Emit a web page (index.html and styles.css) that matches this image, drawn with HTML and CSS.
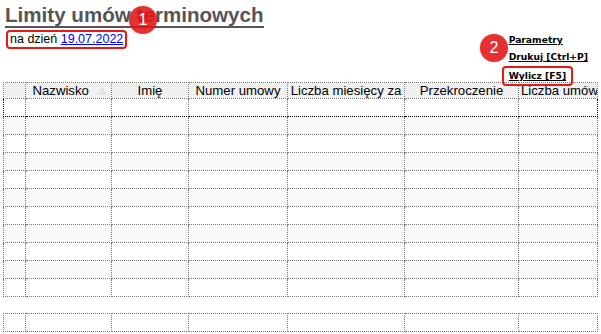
FILE: index.html
```html
<!DOCTYPE html>
<html>

<head>
  <title>Limity umów terminowych</title>
  <link rel="stylesheet" href="styles.css">
</head>

<body>
  <div id="top">
    <div id="heading">
      <h1 id="title">Limity umów terminowych</h1>
      <p id="date" class="marked">na dzień <a href="#">19.07.2022</a></p>
    </div>
    <div id="actions">
      <a href="#">Parametry</a>
      <a href="#">Drukuj [Ctrl+P]</a>
      <a href="#" class="marked">Wylicz [F5]</a>
    </div>
  </div>

  <span class="badge badge-one">1</span>
  <span class="badge badge-two">2</span>

  <table id="grid">
    <colgroup>
      <col class="c-sel">
      <col class="c-name">
      <col class="c-first">
      <col class="c-num">
      <col class="c-months">
      <col class="c-over">
      <col class="c-count">
    </colgroup>
    <thead>
      <tr>
        <th></th>
        <th>Nazwisko <span class="sort">&#9651;</span></th>
        <th>Imię</th>
        <th>Numer umowy</th>
        <th>Liczba miesięcy za</th>
        <th>Przekroczenie</th>
        <th class="left">Liczba umów</th>
      </tr>
    </thead>
    <tbody>
      <tr class="current"><td></td><td></td><td></td><td></td><td></td><td></td><td></td></tr>
      <tr><td></td><td></td><td></td><td></td><td></td><td></td><td></td></tr>
      <tr><td></td><td></td><td></td><td></td><td></td><td></td><td></td></tr>
      <tr><td></td><td></td><td></td><td></td><td></td><td></td><td></td></tr>
      <tr><td></td><td></td><td></td><td></td><td></td><td></td><td></td></tr>
      <tr><td></td><td></td><td></td><td></td><td></td><td></td><td></td></tr>
      <tr><td></td><td></td><td></td><td></td><td></td><td></td><td></td></tr>
      <tr><td></td><td></td><td></td><td></td><td></td><td></td><td></td></tr>
      <tr><td></td><td></td><td></td><td></td><td></td><td></td><td></td></tr>
      <tr><td></td><td></td><td></td><td></td><td></td><td></td><td></td></tr>
      <tr><td></td><td></td><td></td><td></td><td></td><td></td><td></td></tr>
    </tbody>
  </table>

  <table id="totals">
    <colgroup>
      <col class="c-sel">
      <col class="c-name">
      <col class="c-first">
      <col class="c-num">
      <col class="c-months">
      <col class="c-over">
      <col class="c-count">
    </colgroup>
    <tr><td></td><td></td><td></td><td></td><td></td><td></td><td></td></tr>
  </table>
</body>

</html>
```

FILE: styles.css
```css
body {
  margin: 0;
  font-family: "Liberation Sans", Arial, sans-serif;
  background-color: #fff;
  position: relative;
}

#top {
  display: flex;
  justify-content: space-between;
  padding: 4px 13px 0 5px;
  height: 82px;
  box-sizing: border-box;
}

#title {
  margin: 0;
  font-size: 20.6px;
  line-height: 22px;
  color: #555;
  border-bottom: 2px solid #555;
  display: inline-block;
}

#date {
  margin: 2px 0 0 1px;
  font-size: 12.5px;
  line-height: 15px;
  color: #000;
  width: fit-content;
  padding: 0 2px;
}

#date a {
  color: #00f;
}

.marked {
  border: 2px solid #e81818;
  border-radius: 4px;
}

#actions {
  display: flex;
  flex-direction: column;
  align-items: flex-start;
  padding-top: 29px;
  gap: 3px;
}

#actions a {
  color: #000;
  font-family: "DejaVu Sans", Verdana, sans-serif;
  font-weight: bold;
  font-size: 9.2px;
  line-height: 14px;
}

#actions a.marked {
  margin-left: -7px;
  margin-top: -1px;
  padding: 1px 5px 1px 5px;
}

.badge {
  position: absolute;
  width: 28px;
  height: 28px;
  border-radius: 50%;
  background: rgba(225, 20, 20, 0.88);
  color: #fff;
  font-size: 16px;
  line-height: 28px;
  text-align: center;
  box-shadow: 0 0 2px rgba(0, 0, 0, 0.25);
}

.badge-one {
  left: 129px;
  top: 6px;
}

.badge-two {
  left: 480px;
  top: 34px;
}

table {
  border-collapse: collapse;
  table-layout: fixed;
  width: 594px;
  margin-left: 3px;
}

td, th {
  border: 1px dotted #777;
  padding: 0 2px;
  overflow: hidden;
  white-space: nowrap;
}

.c-sel { width: 22px; }
.c-name { width: 86px; }
.c-first { width: 77px; }
.c-num { width: 99px; }
.c-months { width: 117px; }
.c-over { width: 114px; }
.c-count { width: 79px; }

th {
  height: 15px;
  background: #f0f0f0;
  font-weight: normal;
  font-size: 13.2px;
  line-height: 15px;
  color: #000;
  text-align: center;
}

th.left {
  text-align: left;
}

.sort {
  font-size: 8px;
  color: #bbb;
  vertical-align: 2px;
  margin-left: 6px;
}

td {
  height: 17px;
}

tbody tr:nth-child(even) td {
  background: #fafafa;
}

tr.current td {
  border-top: 1px dotted #000;
  border-bottom: 1px dotted #000;
}

tr.current td:first-child {
  border-left: 1px dotted #000;
}

tr.current td:last-child {
  border-right: 1px dotted #000;
}

#totals {
  margin-top: 16px;
}
```
